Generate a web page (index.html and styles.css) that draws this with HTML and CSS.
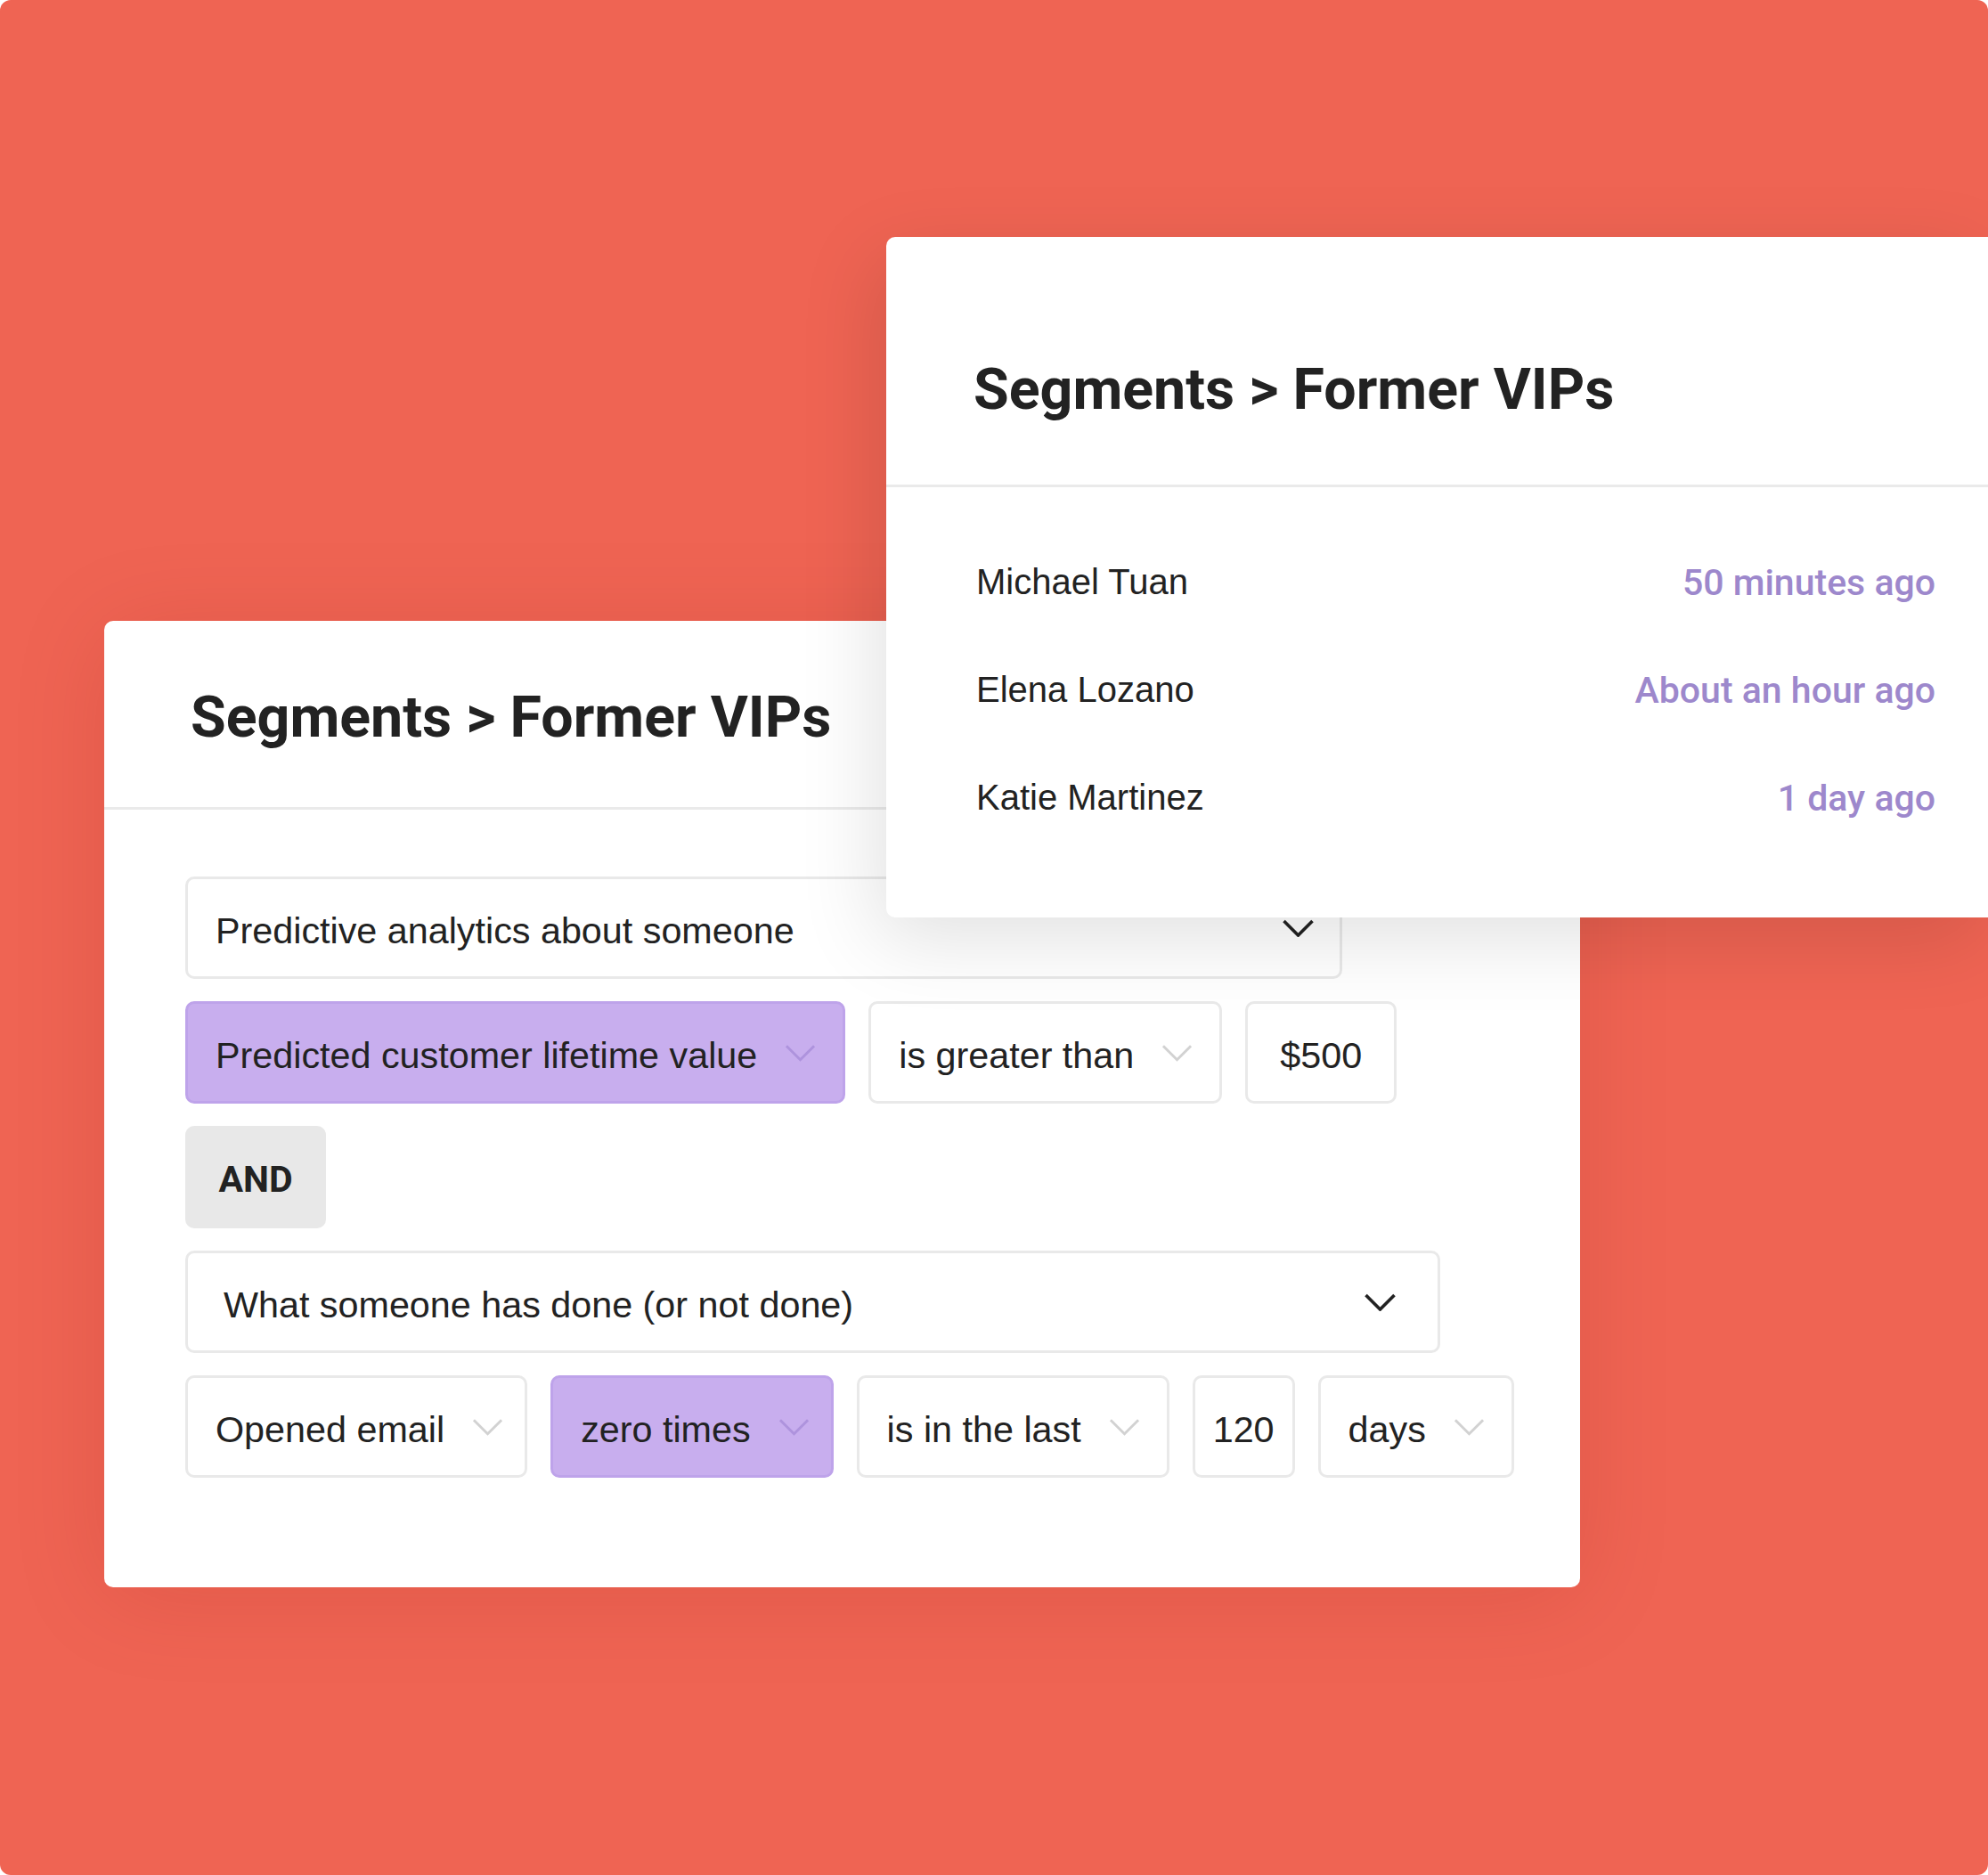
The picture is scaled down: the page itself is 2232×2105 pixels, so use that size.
FILE: index.html
```html
<!DOCTYPE html>
<html lang="en">
<head>
  <meta charset="UTF-8" />
  <title>Segments - Former VIPs</title>
  <link rel="stylesheet" href="styles.css">
</head>
<body>

  <div class="stage">

    <!-- Segment builder (back card) -->
    <section class="card card-back">
      <header class="card-head">
        <h2>Segments &gt; Former VIPs</h2>
      </header>

      <div class="rules">
        <div class="field field-lg field-first">
          <span class="label">Predictive analytics about someone</span>
          <svg class="chev chev-dark" viewBox="0 0 36 20"><polyline points="2,2 18,18 34,2" /></svg>
        </div>

        <div class="rule-row">
          <div class="field field-purple">
            <span class="label">Predicted customer lifetime value</span>
            <svg class="chev" viewBox="0 0 36 20"><polyline points="2,2 18,18 34,2" /></svg>
          </div>
          <div class="field">
            <span class="label">is greater than</span>
            <svg class="chev" viewBox="0 0 36 20"><polyline points="2,2 18,18 34,2" /></svg>
          </div>
          <div class="field field-value">
            <span class="label">$500</span>
          </div>
        </div>

        <div class="and-tag">AND</div>

        <div class="field field-lg field-second">
          <span class="label">What someone has done (or not done)</span>
          <svg class="chev chev-dark" viewBox="0 0 36 20"><polyline points="2,2 18,18 34,2" /></svg>
        </div>

        <div class="rule-row">
          <div class="field field-tight">
            <span class="label">Opened email</span>
            <svg class="chev" viewBox="0 0 36 20"><polyline points="2,2 18,18 34,2" /></svg>
          </div>
          <div class="field field-purple field-tight">
            <span class="label">zero times</span>
            <svg class="chev" viewBox="0 0 36 20"><polyline points="2,2 18,18 34,2" /></svg>
          </div>
          <div class="field">
            <span class="label">is in the last</span>
            <svg class="chev" viewBox="0 0 36 20"><polyline points="2,2 18,18 34,2" /></svg>
          </div>
          <div class="field field-num">
            <span class="label">120</span>
          </div>
          <div class="field">
            <span class="label">days</span>
            <svg class="chev" viewBox="0 0 36 20"><polyline points="2,2 18,18 34,2" /></svg>
          </div>
        </div>
      </div>
    </section>

    <!-- Members list (front card) -->
    <section class="card card-front">
      <header class="card-head">
        <h2>Segments &gt; Former VIPs</h2>
      </header>

      <ul class="members">
        <li><span class="name">Michael Tuan</span><span class="when">50 minutes ago</span></li>
        <li><span class="name">Elena Lozano</span><span class="when">About an hour ago</span></li>
        <li><span class="name">Katie Martinez</span><span class="when">1 day ago</span></li>
      </ul>
    </section>

  </div>

</body>
</html>
```

FILE: styles.css
```css
body {
  margin: 0;
  background: #ffffff;
  font-family: 'Liberation Sans', Arial, sans-serif;
  color: #222222;
}

.stage {
  position: relative;
  width: 2232px;
  height: 2105px;
  box-sizing: border-box;
  padding: 697px 0 0 117px;
  background: #ef6453;
  border-radius: 12px;
  overflow: hidden;
}

.card {
  background: #ffffff;
  border-radius: 10px;
  box-sizing: border-box;
}

.card-head {
  border-bottom: 3px solid #eaeaea;
}

.card-head h2 {
  margin: 0;
  font-family: Roboto, 'Liberation Sans', sans-serif;
  font-size: 64.5px;
  font-weight: 700;
  line-height: 64px;
  color: #222222;
}

/* back card */

.card-back {
  width: 1657px;
  height: 1085px;
  box-shadow: 0 10px 110px rgba(120, 20, 10, 0.12);
}

.card-back .card-head {
  padding: 76px 0 69px 97px;
}

.rules {
  display: flex;
  flex-direction: column;
  align-items: flex-start;
  gap: 25px;
  padding: 75px 0 0 91px;
}

.rule-row {
  display: flex;
  gap: 26px;
}

.field {
  display: flex;
  align-items: center;
  gap: 31px;
  height: 115px;
  box-sizing: border-box;
  padding: 0 30px 0 31px;
  border: 3px solid #e9e9e9;
  border-radius: 10px;
  background: #ffffff;
  font-size: 41.3px;
  white-space: nowrap;
}

.label {
  padding-top: 8px;
}

.field-lg {
  justify-content: space-between;
}

.field-first {
  width: 1299px;
  padding-right: 28px;
}

.field-second {
  width: 1409px;
  padding: 0 46px 0 40px;
}

.field-purple {
  background: #c8aeee;
  border-color: #bea3ea;
}

.field-tight {
  padding-right: 24px;
}

.field-value {
  padding: 0 36px;
}

.field-num {
  padding: 0 20px;
}

.chev {
  width: 35px;
  height: 20px;
  flex: none;
  fill: none;
  stroke: #d2d2d2;
  stroke-width: 3;
}

.field-purple .chev {
  stroke: #ae93dd;
}

.chev-dark {
  width: 37px;
  stroke: #222222;
  stroke-width: 3.6;
}

.and-tag {
  display: flex;
  align-items: center;
  justify-content: center;
  width: 158px;
  height: 115px;
  box-sizing: border-box;
  padding-top: 4px;
  border-radius: 10px;
  background: #e8e8e8;
  font-family: Roboto, 'Liberation Sans', sans-serif;
  font-size: 41px;
  font-weight: 700;
}

/* front card */

.card-front {
  position: absolute;
  left: 995px;
  top: 266px;
  width: 1237px;
  height: 764px;
  border-radius: 10px 0 0 10px;
  box-shadow: -10px 24px 90px rgba(0, 0, 0, 0.12);
}

.card-front .card-head {
  padding: 139px 0 75px 98px;
}

.members {
  list-style: none;
  margin: 0;
  padding: 46px 59px 0 101px;
}

.members li {
  display: flex;
  justify-content: space-between;
  align-items: center;
  height: 121px;
}

.name {
  font-size: 40px;
}

.when {
  font-family: Roboto, 'Liberation Sans', sans-serif;
  font-size: 41px;
  font-weight: 500;
  color: #9d88cc;
}
```
